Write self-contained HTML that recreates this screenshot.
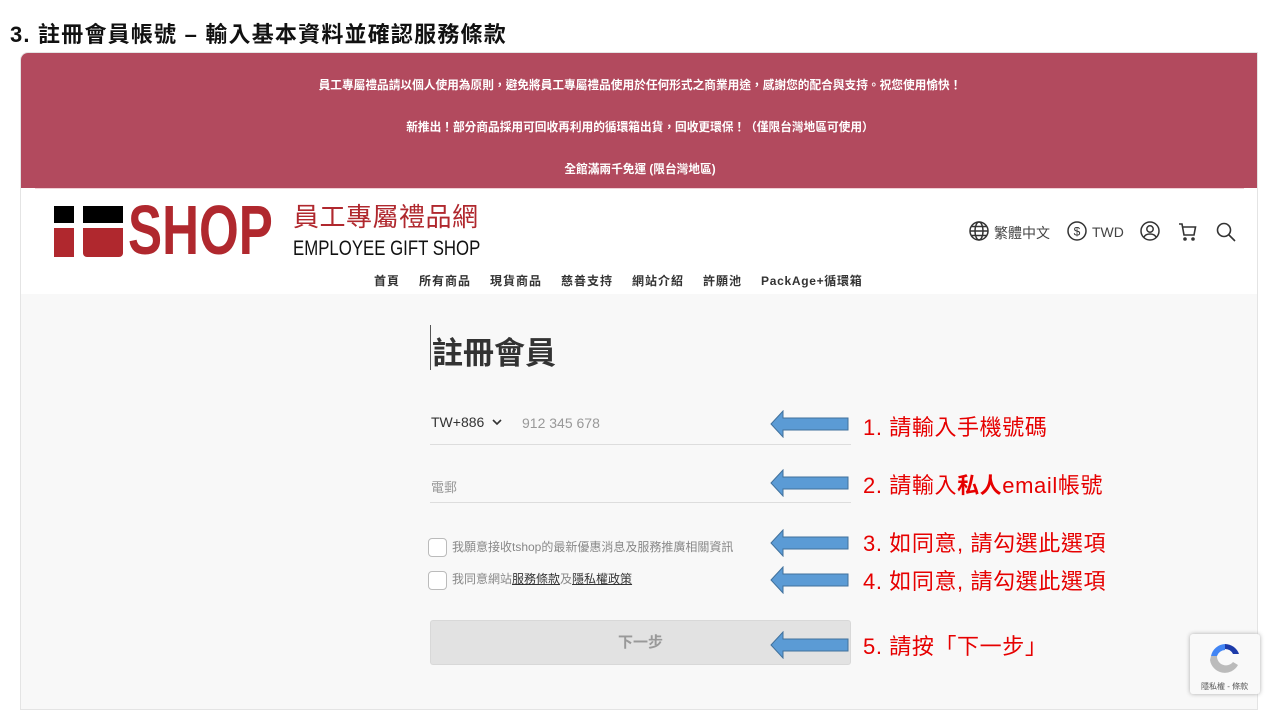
<!DOCTYPE html>
<html><head><meta charset="utf-8"><style>
*{margin:0;padding:0;box-sizing:border-box}
body{width:1280px;height:720px;background:#fff;position:relative;overflow:hidden;font-family:"Liberation Sans","Noto Sans CJK TC",sans-serif}
.a{position:absolute}
.title{left:10px;top:17px;font-size:22px;font-weight:bold;color:#111;white-space:nowrap;letter-spacing:1.2px}
.frame{left:20px;top:52px;width:1238px;height:658px;background:#f8f8f8;border:1px solid #e4e4e4;border-radius:8px 0 0 0;overflow:hidden}
.banner{left:0;top:0;width:1238px;height:135px;background:#b24a5e;color:#fff;font-size:11.7px;font-weight:bold;text-align:center}
.banner div{position:absolute;left:0;width:100%}
.header{left:0;top:135px;width:1238px;height:106px;background:#fff}
.nav{font-size:12px;font-weight:bold;color:#333;letter-spacing:1px;white-space:nowrap}
.red{color:#e60000;font-size:22px;white-space:nowrap;letter-spacing:0.6px}
.arrow{position:absolute;left:770px;width:80px;height:28px}
.line{position:absolute;left:430px;width:421px;height:1px;background:#ddd}
.cb{position:absolute;left:428px;width:19px;height:19px;border:1px solid #bbb;border-radius:4px;background:#fff}
.lab{position:absolute;left:452px;font-size:12px;color:#888;white-space:nowrap}
.lab u{color:#333}
</style></head><body>
<div class="a title">3. 註冊會員帳號 – 輸入基本資料並確認服務條款</div>
<div class="a frame">
 <div class="a banner">
  <div style="top:23px">員工專屬禮品請以個人使用為原則，避免將員工專屬禮品使用於任何形式之商業用途，感謝您的配合與支持。祝您使用愉快！</div>
  <div style="top:65px">新推出！部分商品採用可回收再利用的循環箱出貨，回收更環保！（僅限台灣地區可使用）</div>
  <div style="top:107px">全館滿兩千免運 (限台灣地區)</div>
 </div>
 <div class="a header">
  <div class="a" style="left:14px;top:0;width:1209px;height:1px;background:#f0d0d6"></div>
  <div class="a" style="left:33px;top:18px;width:20px;height:17px;background:#000"></div>
  <div class="a" style="left:33px;top:40px;width:20px;height:29px;background:#b0282e"></div>
  <div class="a" style="left:62px;top:18px;width:40px;height:17px;background:#000"></div>
  <div class="a" style="left:62px;top:40px;width:40px;height:29px;background:#b0282e;border-radius:0 0 4px 4px"></div>
  <div class="a" style="left:107px;top:2px;font-size:70px;font-weight:bold;color:#b0282e;transform:scaleX(0.73);transform-origin:left;line-height:80px">SHOP</div>
  <div class="a" style="left:272px;top:12px;font-size:26px;color:#b0282e;line-height:32px;font-family:'Noto Sans CJK TC',sans-serif;letter-spacing:0.5px">員工專屬禮品網</div>
  <div class="a" style="left:272px;top:48px;font-size:21px;color:#111;line-height:26px;transform:scaleX(0.8);transform-origin:left;white-space:nowrap">EMPLOYEE GIFT SHOP</div>
  <svg class="a" style="left:947px;top:32px" width="22" height="22" viewBox="0 0 22 22" fill="none" stroke="#333" stroke-width="1.5"><circle cx="11" cy="11" r="9"/><ellipse cx="11" cy="11" rx="4" ry="9"/><path d="M2 11h18M3.5 6.5h15M3.5 15.5h15"/></svg>
  <div class="a" style="left:973px;top:35px;font-size:14px;color:#444">繁體中文</div>
  <svg class="a" style="left:1045px;top:32px" width="22" height="22" viewBox="0 0 22 22" fill="none" stroke="#333" stroke-width="1.5"><circle cx="11" cy="11" r="9"/><text x="11" y="15.5" font-size="12" text-anchor="middle" fill="#333" stroke="none" font-family="Liberation Sans">$</text></svg>
  <div class="a" style="left:1071px;top:36px;font-size:14px;color:#444">TWD</div>
  <svg class="a" style="left:1118px;top:32px" width="22" height="22" viewBox="0 0 22 22" fill="none" stroke="#333" stroke-width="1.5"><circle cx="11" cy="11" r="9"/><circle cx="11" cy="9" r="3.2"/><path d="M5 17c2-4 10-4 12 0"/></svg>
  <svg class="a" style="left:1156px;top:33px" width="22" height="22" viewBox="0 0 22 22" fill="none" stroke="#333" stroke-width="1.6"><path d="M2 3h3l2 11h10l1.5-8H6"/><circle cx="8" cy="18" r="1" fill="#333"/><circle cx="16" cy="18" r="1" fill="#333"/></svg>
  <svg class="a" style="left:1194px;top:33px" width="22" height="22" viewBox="0 0 22 22" fill="none" stroke="#333" stroke-width="1.6"><circle cx="9" cy="9" r="6.5"/><path d="M14 14l6 6"/></svg>
  <div class="a nav" style="left:353px;top:84px">首頁</div>
  <div class="a nav" style="left:398px;top:84px">所有商品</div>
  <div class="a nav" style="left:469px;top:84px">現貨商品</div>
  <div class="a nav" style="left:540px;top:84px">慈善支持</div>
  <div class="a nav" style="left:611px;top:84px">網站介紹</div>
  <div class="a nav" style="left:682px;top:84px">許願池</div>
  <div class="a nav" style="left:740px;top:84px;letter-spacing:0.7px">PackAge+循環箱</div>
 </div>
</div>
<div class="a" style="left:430px;top:325px;width:1px;height:45px;background:#555"></div>
<div class="a" style="left:432px;top:328px;font-size:31px;font-weight:bold;color:#333;font-family:'Noto Sans CJK TC',sans-serif">註冊會員</div>
<div class="a" style="left:431px;top:414px;font-size:14px;color:#333">TW+886</div>
<svg class="a" style="left:491px;top:417px" width="12" height="10" viewBox="0 0 12 10"><path d="M2 3l4 4 4-4" fill="none" stroke="#333" stroke-width="1.6"/></svg>
<div class="a" style="left:522px;top:415px;font-size:14px;color:#999">912 345 678</div>
<div class="line" style="top:444px"></div>
<div class="a" style="left:431px;top:477px;font-size:13px;color:#999">電郵</div>
<div class="line" style="top:502px"></div>
<div class="cb" style="top:538px"></div><div class="lab" style="top:538px">我願意接收tshop的最新優惠消息及服務推廣相關資訊</div>
<div class="cb" style="top:571px"></div><div class="lab" style="top:570px">我同意網站<u>服務條款</u>及<u>隱私權政策</u></div>
<div class="a" style="left:430px;top:620px;width:421px;height:45px;background:#e2e2e2;border:1px solid #d8d8d8;border-radius:3px;text-align:center;line-height:43px;font-size:15px;font-weight:bold;color:#999">下一步</div>
<svg width="0" height="0" style="position:absolute"><defs><symbol id="ar" viewBox="0 0 80 28"><path d="M1 14L13 1v7h65v12H13v7z" fill="#5b9bd5" stroke="#41719c" stroke-width="1"/></symbol></defs></svg>
<svg class="arrow" style="top:410px"><use href="#ar"/></svg>
<svg class="arrow" style="top:469px"><use href="#ar"/></svg>
<svg class="arrow" style="top:529px"><use href="#ar"/></svg>
<svg class="arrow" style="top:566px"><use href="#ar"/></svg>
<svg class="arrow" style="top:631px"><use href="#ar"/></svg>
<div class="a red" style="left:863px;top:410px">1. 請輸入手機號碼</div>
<div class="a red" style="left:863px;top:468px">2. 請輸入<b>私人</b>email帳號</div>
<div class="a red" style="left:863px;top:526px">3. 如同意, 請勾選此選項</div>
<div class="a red" style="left:863px;top:564px">4. 如同意, 請勾選此選項</div>
<div class="a red" style="left:863px;top:629px">5. 請按「下一步」</div>
<div class="a" style="left:1190px;top:634px;width:70px;height:60px;background:#f9f9f9;border-radius:3px;box-shadow:0 0 4px #aaa"></div>
<svg class="a" style="left:1205px;top:640px" width="40" height="38" viewBox="0 0 40 38"><path d="M20 4a15 15 0 0 1 14 10l-6 0a9 9 0 0 0-8-5z" fill="#1c3aa9"/><path d="M6 16A15 15 0 0 1 20 4v6a9 9 0 0 0-8 6z" fill="#4285f4"/><path d="M6 16h6a9 9 0 0 0 16 6l5 3A15 15 0 0 1 5 20z" fill="#bbb"/></svg>
<div class="a" style="left:1201px;top:681px;font-size:8px;color:#555">隱私權 - 條款</div>
</body></html>
